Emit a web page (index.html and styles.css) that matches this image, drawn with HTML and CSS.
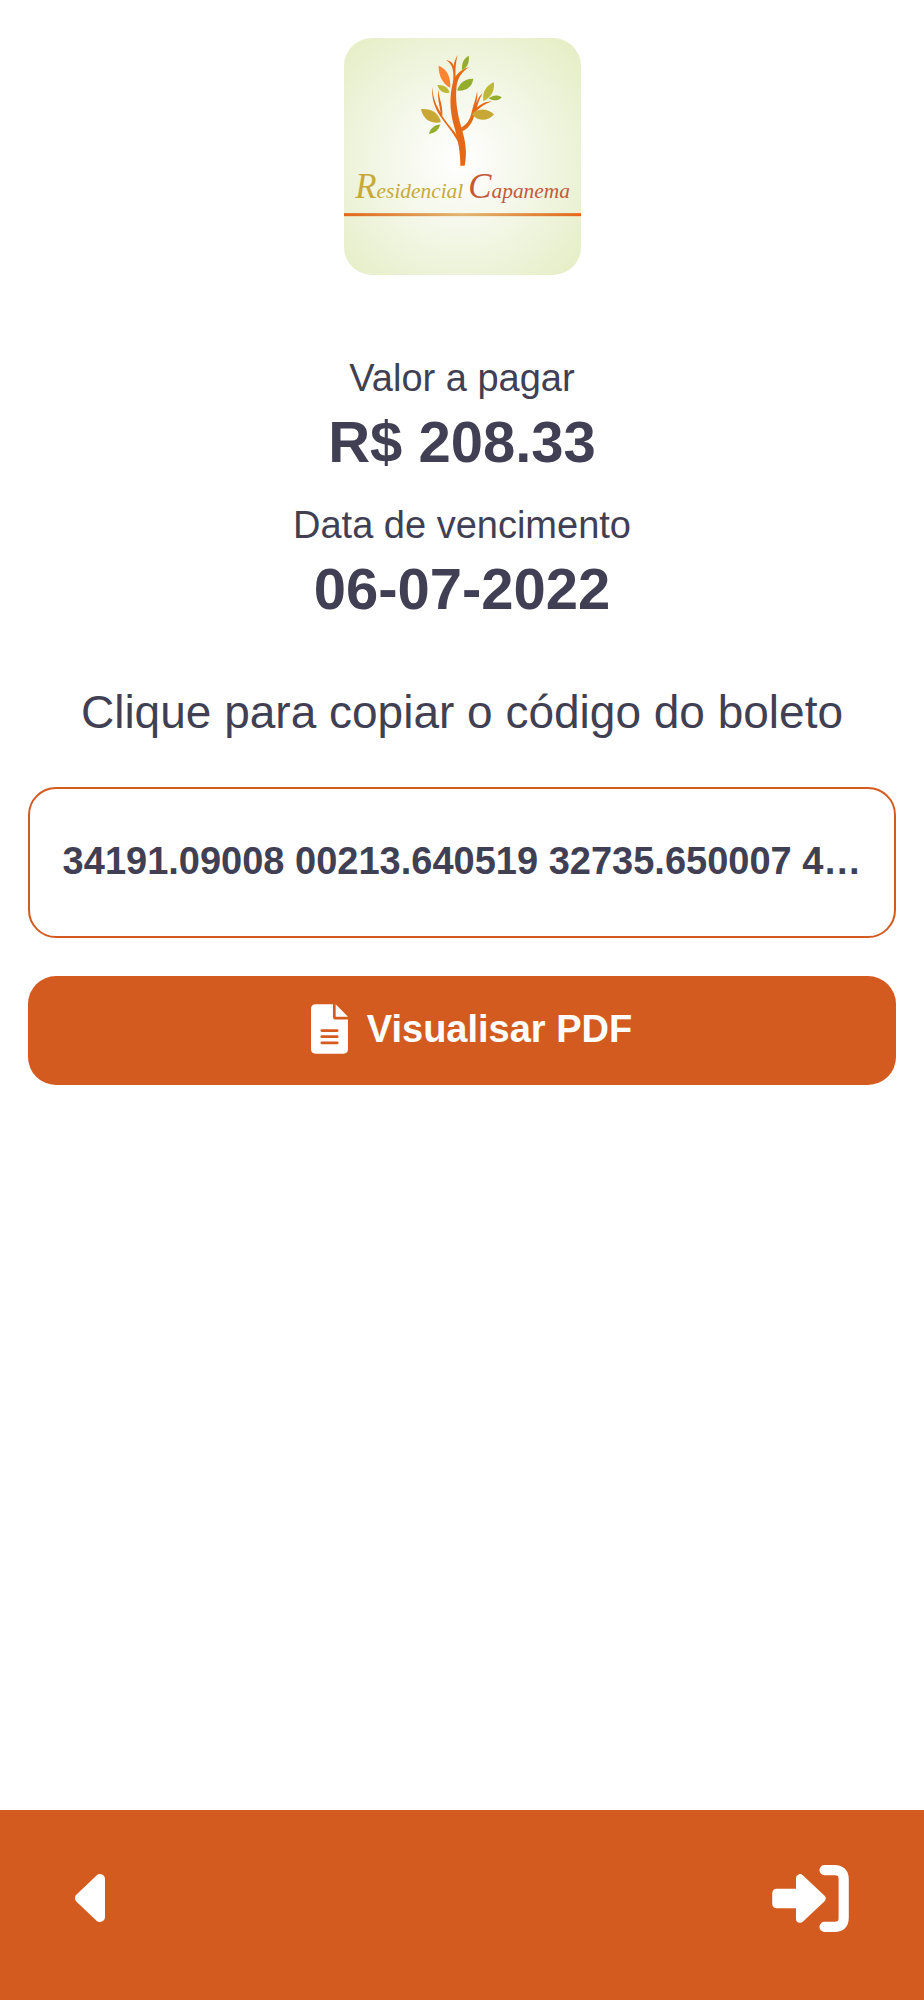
FILE: index.html
```html
<!DOCTYPE html>
<html lang="pt-BR">
<head>
<meta charset="utf-8">
<meta name="viewport" content="width=device-width, initial-scale=1">
<title>Residencial Capanema</title>
<link rel="stylesheet" href="styles.css">
</head>
<body>
<main class="content">
  <svg class="logo" viewBox="36 37 709 709" role="img" aria-label="Residencial Capanema">
    <defs>
      <radialGradient id="glow" gradientUnits="userSpaceOnUse" cx="380" cy="400" r="480">
        <stop offset="0" stop-color="#ffffff"/>
        <stop offset="0.4" stop-color="#f5f8eb"/>
        <stop offset="0.75" stop-color="#ecf2d6"/>
        <stop offset="1" stop-color="#e6eec6"/>
      </radialGradient>
      <linearGradient id="rule">
        <stop offset="0" stop-color="#e2661a"/>
        <stop offset="0.5" stop-color="#e0b670"/>
        <stop offset="1" stop-color="#e2661a"/>
      </linearGradient>
    </defs>
    <rect x="36" y="37" width="709" height="709" fill="url(#glow)"/>
    <g fill="#e56a17">
      <path d="M384 419C384 380 378 345 366 303C355 266 351 225 358 188C364 150 379 134 411 124C389 138 377 155 373 180C368 220 375 263 387 304C400 347 405 380 397 419Z"/>
      <path d="M362 174C366 138 362 115 341 103C356 106 361 112 364 121C365 110 370 98 376 88C368 117 369 145 371 174Z"/>
      <path d="M382 360C373 332 347 304 324 271C308 248 297 218 300 183C302 219 314 242 325 260C322 237 315 217 318 190C320 218 333 240 330 270C349 300 372 319 382 343Z"/>
      <path d="M384 306C410 293 415 273 420 250C425 229 432 215 434 196C437 211 433 223 431 233C436 219 443 207 450 203C441 220 437 232 434 244C448 232 461 226 479 226C459 233 443 243 427 261C423 287 409 311 384 317Z"/>
    </g>
    <path fill="#ff8432" d="M319 120C346 131 355 155 354 186C331 174 319 151 319 120Z"/>
    <g fill="#94ad2c">
      <path d="M409 90C412 111 404 127 389 133C387 112 395 98 409 90Z"/>
      <path d="M423 159C419 185 400 197 374 194C382 170 400 158 423 159Z"/>
      <path d="M508 214C496 226 482 226 469 217C482 207 496 206 508 214Z"/>
      <path d="M324 296C319 314 306 323 290 324C294 307 308 297 324 296Z"/>
    </g>
    <g fill="#bdb936">
      <path d="M315 178C334 176 348 185 352 201C333 203 321 195 315 178Z"/>
      <path d="M484 169C488 195 476 215 453 226C449 202 459 181 484 169Z"/>
    </g>
    <g fill="#c8a735">
      <path d="M266 250C293 247 319 258 326 289C295 295 274 280 266 250Z"/>
      <path d="M418 265C437 246 464 247 485 265C464 289 437 286 418 265Z"/>
    </g>
    <g class="logo-name">
      <text x="70" y="515" fill="#c7a93b"><tspan class="logo-initial">R</tspan>esidencial</text>
      <text x="408" y="515" fill="#c4593a"><tspan class="logo-initial">C</tspan>apanema</text>
    </g>
    <rect x="36" y="561" width="709" height="9" fill="url(#rule)"/>
  </svg>

  <dl class="summary">
    <div class="summary-item">
      <dt class="label">Valor a pagar</dt>
      <dd class="value">R$ 208.33</dd>
    </div>
    <div class="summary-item">
      <dt class="label">Data de vencimento</dt>
      <dd class="value">06-07-2022</dd>
    </div>
  </dl>

  <p class="hint" id="hint">Clique para copiar o código do boleto</p>
  <button class="code" type="button" aria-describedby="hint"><span class="code-text">34191.09008 00213.640519 32735.650007 4…</span></button>
  <button class="pdf" type="button">
    <svg class="pdf-icon" viewBox="0 0 384 512" aria-hidden="true">
      <path fill="currentColor" fill-rule="evenodd" d="M48 0H228V128Q228 158 258 158H384V464Q384 512 336 512H48Q0 512 0 464V48Q0 0 48 0ZM112 258a12 12 0 0 0 0 28H272a12 12 0 0 0 0-28ZM112 322a12 12 0 0 0 0 28H272a12 12 0 0 0 0-28ZM112 386a12 12 0 0 0 0 28H272a12 12 0 0 0 0-28ZM256 0L384 128H256Z"/>
    </svg>
    Visualisar PDF
  </button>
</main>

<nav class="bar">
  <button class="bar-button" type="button" aria-label="Voltar">
    <svg class="back-icon" viewBox="0 0 30 48" aria-hidden="true">
      <path fill="currentColor" stroke="currentColor" stroke-width="10" stroke-linejoin="round" d="M25 5V43L5 24Z"/>
    </svg>
  </button>
  <button class="bar-button" type="button" aria-label="Sair">
    <svg class="exit-icon" viewBox="0 32 512 448" aria-hidden="true">
      <path fill="currentColor" d="M32 191H180V321H32Q0 321 0 289V223Q0 191 32 191Z"/>
      <path fill="currentColor" stroke="currentColor" stroke-width="54" stroke-linejoin="round" d="M186 121V391L330 256Z"/>
      <path fill="none" stroke="currentColor" stroke-width="68" stroke-linecap="round" d="M350 66H416Q478 66 478 128V384Q478 446 416 446H350"/>
    </svg>
  </button>
</nav>
</body>
</html>
```
FILE: styles.css
```css
* {
  box-sizing: border-box;
}

body {
  display: flex;
  flex-direction: column;
  min-height: 100vh;
  margin: 0;
  background: #fff;
  color: #413f54;
  font-family: "Liberation Sans", Arial, sans-serif;
}

button {
  border: 0;
  background: none;
  color: inherit;
  font: inherit;
  cursor: pointer;
}

.content {
  display: flex;
  flex: 1;
  flex-direction: column;
  align-items: center;
  padding: 38px 28px;
}

.logo {
  width: 237px;
  height: 237px;
  border-radius: 28px;
}

.logo-name {
  font-family: "Liberation Serif", "Times New Roman", serif;
  font-size: 64px;
  font-style: italic;
}

.logo-initial {
  font-size: 104px;
}

.summary {
  display: flex;
  flex-direction: column;
  gap: 27px;
  margin: 81px 0 0;
  text-align: center;
}

.summary-item {
  display: flex;
  flex-direction: column;
  gap: 8px;
}

.label {
  font-size: 38px;
  line-height: 44px;
}

.value {
  margin: 0;
  font-size: 58px;
  font-weight: bold;
  line-height: 68px;
}

.hint {
  margin: 62px 0 48px;
  font-size: 46px;
  line-height: 54px;
  text-align: center;
}

.code,
.pdf {
  width: 100%;
  border-radius: 28px;
  font-size: 38px;
  font-weight: bold;
  line-height: 44px;
}

.code {
  padding: 50px 30px 53px;
  border: 2px solid #d45b20;
}

.code-text {
  display: block;
  overflow: hidden;
  text-overflow: ellipsis;
  white-space: nowrap;
}

.pdf {
  display: flex;
  align-items: center;
  justify-content: center;
  margin-top: 38px;
  padding: 28px 32px 31px;
  background: #d45b20;
  color: #fff;
}

.pdf-icon {
  width: 37px;
  height: 50px;
  margin: 0 19px;
}

.bar {
  display: flex;
  align-items: center;
  justify-content: space-between;
  height: 190px;
  padding: 0 75px 14px;
  background: #d45b20;
  color: #fff;
}

.bar-button {
  display: flex;
  padding: 0;
}

.back-icon {
  width: 30px;
  height: 48px;
}

.exit-icon {
  width: 77px;
  height: 67px;
}
```
